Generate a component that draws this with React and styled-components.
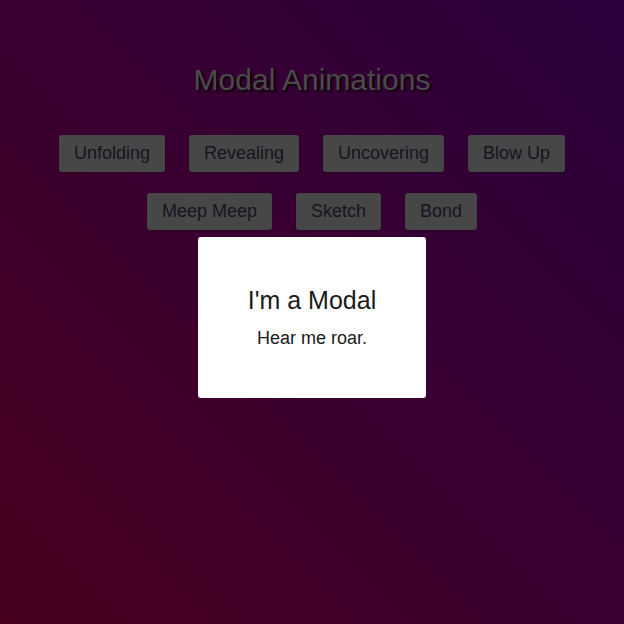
import React from "react";
import styled, { createGlobalStyle } from "styled-components";

const GlobalStyle = createGlobalStyle`
  html, body {
    margin: 0;
    height: 100%;
  }
  body {
    font-family: "Liberation Sans", Arial, sans-serif;
    background: linear-gradient(45deg, #47001e 0%, #3a0030 50%, #2b003d 100%);
    min-height: 624px;
  }
`;

const Page = styled.div`
  display: flex;
  flex-direction: column;
  align-items: center;
  padding-top: 62px;
`;

const Title = styled.h1`
  margin: 0;
  font-size: 30px;
  font-weight: normal;
  line-height: 36px;
  color: #4b4b4b;
  text-shadow: 2px 2px 2px #0d0008;
`;

const Buttons = styled.div`
  display: flex;
  flex-wrap: wrap;
  justify-content: center;
  gap: 21px 24px;
  width: 560px;
  margin-top: 37px;
`;

const Button = styled.button`
  font-family: inherit;
  font-size: 18px;
  line-height: 21px;
  padding: 8px 15px;
  border: none;
  border-radius: 3px;
  background: #474747;
  color: #15151f;
  box-shadow: 0 1px 2px rgba(0, 0, 0, 0.3);
  cursor: pointer;
`;

const Modal = styled.div`
  position: fixed;
  top: 237px;
  left: 50%;
  transform: translateX(-50%);
  width: 228px;
  height: 161px;
  background: #fff;
  border-radius: 3px;
  display: flex;
  flex-direction: column;
  align-items: center;
  justify-content: center;
  color: #1a1a1a;
`;

const ModalTitle = styled.h2`
  margin: 0 0 13px;
  font-size: 25px;
  font-weight: normal;
  line-height: 29px;
`;

const ModalText = styled.p`
  margin: 0;
  font-size: 18px;
  line-height: 21px;
`;

const animations = [
  "Unfolding",
  "Revealing",
  "Uncovering",
  "Blow Up",
  "Meep Meep",
  "Sketch",
  "Bond",
];

export default function App() {
  return (
    <>
      <GlobalStyle />
      <Page>
        <Title>Modal Animations</Title>
        <Buttons>
          {animations.map((name) => (
            <Button key={name}>{name}</Button>
          ))}
        </Buttons>
      </Page>
      <Modal>
        <ModalTitle>I'm a Modal</ModalTitle>
        <ModalText>Hear me roar.</ModalText>
      </Modal>
    </>
  );
}
